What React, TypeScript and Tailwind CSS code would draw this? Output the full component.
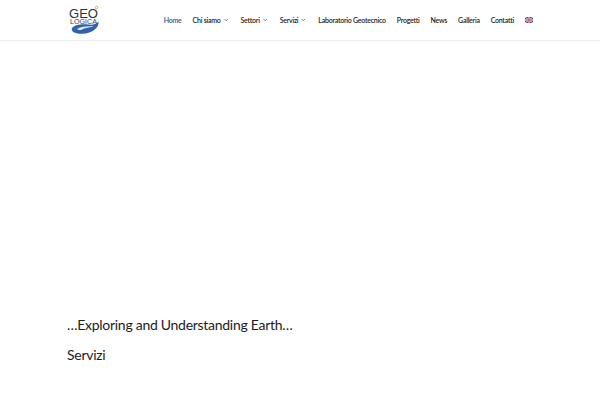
const menu = [
  { label: "Chi siamo", sub: true },
  { label: "Settori", sub: true },
  { label: "Servizi", sub: true },
  { label: "Laboratorio Geotecnico", sub: false },
  { label: "Progetti", sub: false },
  { label: "News", sub: false },
  { label: "Galleria", sub: false },
  { label: "Contatti", sub: false },
];

const Logo = () => (
  <svg width="32" height="30" viewBox="0 0 32 30" className="block">
    <path
      d="M3 23 C6 19.5 13 19 19 19.5 C24 20 28 19 29.5 16.5 C30.5 22 24 28.5 13 28.8 C6 29 1.5 26.5 3 23 Z"
      fill="#2f64ac"
    />
    <path d="M8 24 C12 21.5 19 21 25 21.5 C19 22.5 15 23 12 25 C10 25 8.5 24.8 8 24 Z" fill="#e6edf6" />
    <text x="0" y="12.5" fontSize="13.5" textLength="29" lengthAdjust="spacingAndGlyphs" fill="#2a3442" fontFamily="Liberation Sans, sans-serif">
      GEO
    </text>
    <circle cx="27.5" cy="2.5" r="1.2" fill="none" stroke="#c9853a" strokeWidth="0.7" />
    <text x="1" y="18.5" fontSize="6.5" textLength="27" lengthAdjust="spacingAndGlyphs" fill="#34445c" fontFamily="Liberation Sans, sans-serif">
      LOGICA
    </text>
  </svg>
);

const Chevron = () => (
  <svg width="9" height="8" viewBox="0 0 9 8" className="block">
    <path d="M3.5 3 L5.2 4.8 L6.9 3" fill="none" stroke="#555" strokeWidth="0.7" />
  </svg>
);

const Flag = () => (
  <svg width="8" height="6" viewBox="0 0 8 6" className="block">
    <rect width="8" height="6" fill="#3c4a8c" />
    <path d="M0 0L8 6M8 0L0 6" stroke="#e8e0e4" strokeWidth="1" />
    <path d="M4 0V6M0 3H8" stroke="#e8e0e4" strokeWidth="1.8" />
    <path d="M4 0V6M0 3H8" stroke="#cf3c58" strokeWidth="1" />
  </svg>
);

export default function App() {
  return (
    <div className="h-[400px] w-[600px] overflow-hidden bg-white font-['Lato','Noto_Sans',sans-serif] text-[#1c1c1c]">
      <header className="flex h-[41px] items-center justify-between border-b border-[#eeeeee] pl-[69px] pr-[67px] shadow-[0_1px_2px_rgba(0,0,0,0.03)]">
        <Logo />
        <nav className="flex items-center gap-[11px] text-[7px] font-semibold tracking-[-0.25px]">
          <a className="text-[#3d4f86]">Home</a>
          {menu.map((item) => (
            <div key={item.label} className="flex items-center">
              <a className="whitespace-nowrap">{item.label}</a>
              {item.sub && <Chevron />}
            </div>
          ))}
          <Flag />
        </nav>
      </header>
      <main className="pl-[67px] pt-[275px] text-[14px] leading-[18px] tracking-[-0.28px]">
        <h2>…Exploring and Understanding Earth…</h2>
        <h2 className="mt-[12px]">Servizi</h2>
      </main>
    </div>
  );
}
